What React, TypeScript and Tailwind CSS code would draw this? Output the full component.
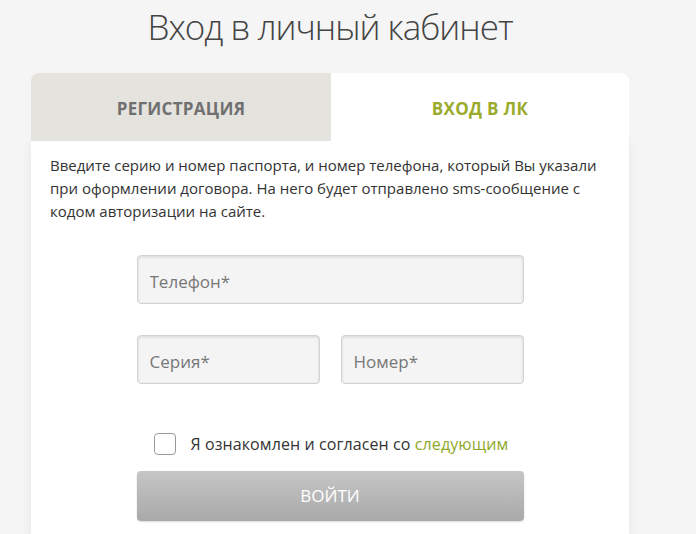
export default function App() {
  return (
    <div className="min-h-[534px] w-[696px] bg-[#f5f5f5] font-['Open_Sans',sans-serif] overflow-hidden">
      <div className="ml-[31px] w-[598px]">
        {/* Title */}
        <h1 className="pt-[2px] h-[73px] text-center text-[35px] leading-[50px] font-light text-[#444444] tracking-[-1px]">
          Вход в личный кабинет
        </h1>

        {/* Tabs */}
        <div className="flex h-[68px]">
          <button className="w-[300px] pt-[3px] rounded-tl-[8px] bg-[#e4e3dd] text-[17px] font-bold text-[#707070] uppercase tracking-[0.3px]">
            Регистрация
          </button>
          <button className="flex-1 pt-[3px] rounded-tr-[8px] bg-white text-[17px] font-bold text-[#9aab2c] uppercase tracking-[0.3px]">
            Вход в ЛК
          </button>
        </div>

        {/* Body */}
        <div className="bg-white shadow-[0_2px_12px_rgba(0,0,0,0.06)] pt-[13px] px-[19px] pb-[20px]">
          <p className="text-[15px] leading-[23px] text-[#333333]">
            Введите серию и номер паспорта, и номер телефона, который Вы указали при оформлении договора. На него будет отправлено sms-сообщение с кодом авторизации на сайте.
          </p>

          <div className="mx-auto mt-[32px] w-[387px] flex flex-col">
            <input
              placeholder="Телефон*"
              className="h-[49px] w-full rounded-[4px] border border-[#d2d2d2] bg-[#f4f4f4] px-3 pt-[3px] text-[17px] text-[#555] placeholder:text-[#777] shadow-[inset_0_1px_3px_rgba(0,0,0,0.12)] outline-none"
            />
            <div className="mt-[31px] flex gap-[21px]">
              <input
                placeholder="Серия*"
                className="h-[49px] w-[183px] rounded-[4px] border border-[#d2d2d2] bg-[#f4f4f4] px-3 pt-[3px] text-[17px] text-[#555] placeholder:text-[#777] shadow-[inset_0_1px_3px_rgba(0,0,0,0.12)] outline-none"
              />
              <input
                placeholder="Номер*"
                className="h-[49px] w-[183px] rounded-[4px] border border-[#d2d2d2] bg-[#f4f4f4] px-3 pt-[3px] text-[17px] text-[#555] placeholder:text-[#777] shadow-[inset_0_1px_3px_rgba(0,0,0,0.12)] outline-none"
              />
            </div>

            <label className="mt-[48px] ml-[17px] flex items-center gap-[15px]">
              <span className="h-[22px] w-[22px] rounded-[4px] border border-[#9a9a9a] bg-white" />
              <span className="text-[16px] text-[#333333] tracking-[0.1px]">
                Я ознакомлен и согласен со <a className="text-[#8fa82a]">следующим</a>
              </span>
            </label>

            <button className="mt-[15px] h-[50px] w-full rounded-[4px] bg-gradient-to-b from-[#c6c6c6] to-[#a9a9a9] text-[17px] text-white uppercase shadow-[0_1px_2px_rgba(0,0,0,0.15)]">
              Войти
            </button>
          </div>
        </div>
      </div>
    </div>
  );
}
